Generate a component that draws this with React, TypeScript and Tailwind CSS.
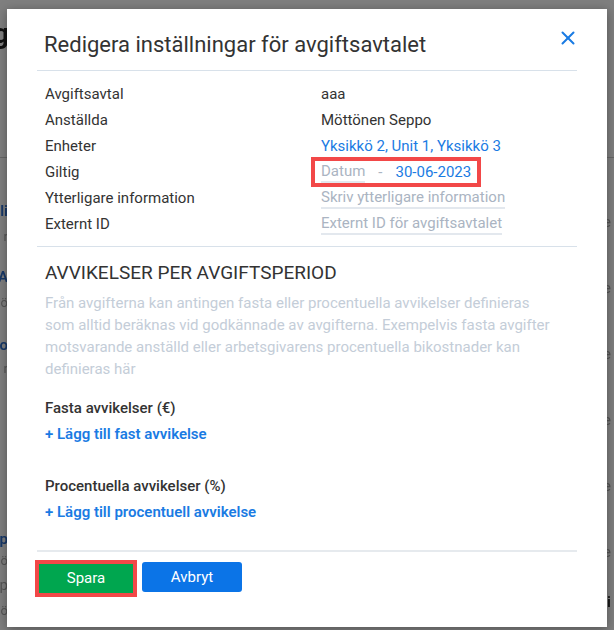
import { X } from 'lucide-react'

// what is left visible of the page behind the dialog, at the left and right edges
const leftBits = [
  { text: 'li', top: 44, cls: 'text-[15px] font-semibold text-[#2f6fd0]' },
  { text: 'r', top: 8, cls: 'text-[13px] text-[#aaa]' },
  { text: 'A', top: 22, cls: 'text-[15px] font-semibold text-[#2f6fd0]' },
  { text: 'ö', top: 8, cls: 'text-[13px] text-[#aaa]' },
  { text: 'o', top: 24, cls: 'text-[15px] font-semibold text-[#2f6fd0]' },
  { text: 'r', top: 6, cls: 'text-[13px] text-[#aaa]' },
  { text: 'pp', top: 152, cls: 'text-[15px] font-semibold text-[#2f6fd0]' },
  { text: 'ö', top: 4, cls: 'text-[13px] text-[#aaa]' },
  { text: 'p', top: 6, cls: 'text-[15px] text-[#aaa]' },
  { text: 'ö', top: 8, cls: 'text-[13px] text-[#aaa]' },
]

const rightBits = [222, 288, 354, 420, 486, 552]

function Backdrop() {
  return (
    <div className="flex h-full justify-between blur-[0.6px]">
      <div className="flex w-[12px] flex-col items-end">
        <div className="flex h-[158px] w-full flex-col items-end border-b border-[#ccc]">
          <span className="mt-[18px] whitespace-nowrap pr-[3px] text-[28px] font-bold leading-[32px] text-[#222]">g</span>
        </div>
        {leftBits.map((b, i) => (
          <span key={i} className={`whitespace-nowrap pr-[4px] leading-[18px] ${b.cls}`} style={{ marginTop: b.top }}>
            {b.text}
          </span>
        ))}
      </div>
      <div className="flex w-[12px] flex-col">
        <div className="h-[158px] w-full border-b border-[#ccc]" />
        {rightBits.map((y, i) => (
          <span
            key={y}
            className="whitespace-nowrap pl-[1px] text-[15px] leading-[18px] text-[#aaa]"
            style={{ marginTop: i === 0 ? y - 158 - 9 : 48 }}
          >
            e
          </span>
        ))}
        <span className="mt-[32px] whitespace-nowrap text-[15px] font-semibold leading-[18px] text-[#333]">ti</span>
      </div>
    </div>
  )
}

const rows: { label: string; value: React.ReactNode }[] = [
  { label: 'Avgiftsavtal', value: <span className="text-[#333]">aaa</span> },
  { label: 'Anställda', value: <span className="text-[#333]">Möttönen Seppo</span> },
  { label: 'Enheter', value: <span className="text-[#1a7be3]">Yksikkö 2, Unit 1, Yksikkö 3</span> },
  {
    label: 'Giltig',
    value: (
      <div className="-my-[2px] -ml-[10px] flex h-[30px] items-center border-4 border-[#f24848] pl-[6px] pr-[6px]">
        <span className="border-b-2 border-[#e3e8ee] leading-[20px] text-[#aab4c2]">Datum</span>
        <span className="mx-[13px] text-[#aab4c2]">-</span>
        <span className="text-[#1a7be3]">30-06-2023</span>
      </div>
    ),
  },
  {
    label: 'Ytterligare information',
    value: <span className="border-b-2 border-[#e3e8ee] leading-[20px] text-[#aab4c2]">Skriv ytterligare information</span>,
  },
  {
    label: 'Externt ID',
    value: <span className="border-b-2 border-[#e3e8ee] leading-[20px] text-[#aab4c2]">Externt ID för avgiftsavtalet</span>,
  },
]

export default function App() {
  return (
    <div className="relative h-[630px] w-[614px] overflow-hidden bg-white font-['Roboto',sans-serif]">
      <Backdrop />
      <div className="absolute inset-0 bg-black/50" />

      <div className="absolute left-[7px] top-[9px] flex h-[618px] w-[600px] flex-col bg-white px-[30px] shadow-[0_2px_10px_rgba(0,0,0,0.35)]">
        {/* header */}
        <div className="flex h-[62px] items-start justify-between border-b border-[#d8e1ea] pl-[7px]">
          <h2 className="mt-[21px] text-[22px] font-normal leading-[30px] text-[#333]">
            Redigera inställningar för avgiftsavtalet
          </h2>
          <button className="mr-[-2px] mt-[18px] text-[#1a7be3]">
            <X size={22} strokeWidth={2.2} />
          </button>
        </div>

        {/* agreement details */}
        <div className="border-b border-[#d8e1ea] px-[8px] pb-[9px] pt-[10px] text-[15px]">
          {rows.map((r) => (
            <div key={r.label} className="flex h-[26px] items-center">
              <div className="w-[276px] text-[#333]">{r.label}</div>
              <div className="flex items-center">{r.value}</div>
            </div>
          ))}
        </div>

        {/* deviations */}
        <div className="px-[8px] pt-[12px]">
          <h3 className="text-[19px] font-normal leading-[28px] text-[#333]">AVVIKELSER PER AVGIFTSPERIOD</h3>
          <p className="mt-[5px] text-[15px] leading-[22px] text-[#c4cdd8]">
            Från avgifterna kan antingen fasta eller procentuella avvikelser definieras
            <br />
            som alltid beräknas vid godkännade av avgifterna. Exempelvis fasta avgifter
            <br />
            motsvarande anställd eller arbetsgivarens procentuella bikostnader kan
            <br />
            definieras här
          </p>

          <div className="mt-[15px] text-[15px] font-medium leading-[26px] text-[#333]">Fasta avvikelser (€)</div>
          <button className="block text-[15px] font-semibold leading-[26px] text-[#1a7be3]">+ Lägg till fast avvikelse</button>

          <div className="mt-[26px] text-[15px] font-medium leading-[26px] text-[#333]">Procentuella avvikelser (%)</div>
          <button className="block text-[15px] font-semibold leading-[26px] text-[#1a7be3]">
            + Lägg till procentuell avvikelse
          </button>
        </div>

        {/* footer */}
        <div className="mt-[25px] flex items-start gap-[5px] border-t-2 border-[#e6eaee] pt-[8px]">
          <div className="-ml-[2px] border-4 border-[#f24848]">
            <button className="h-[29px] w-[94px] bg-[#00a64f] text-[15px] text-white">Spara</button>
          </div>
          <button className="mt-[2px] h-[30px] w-[100px] rounded-[3px] bg-[#0b74e7] text-[15px] text-white">Avbryt</button>
        </div>
      </div>
    </div>
  )
}
